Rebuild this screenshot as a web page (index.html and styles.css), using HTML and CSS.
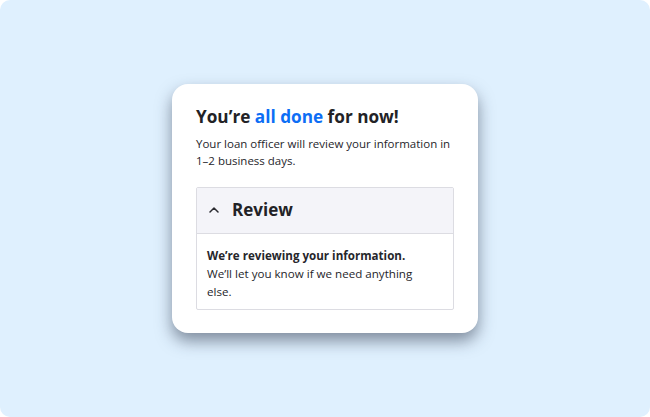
FILE: index.html
```html
<!DOCTYPE html>
<html>
<head>
<meta charset="utf-8">
<link rel="stylesheet" href="styles.css">
</head>
<body>
<div class="stage">
  <div class="card">
    <h1 class="title">You’re <span class="accent">all done</span> for now!</h1>
    <p class="subtitle">Your loan officer will review your information in 1–2 business days.</p>
    <div class="panel">
      <div class="panel-head">
        <svg class="chevron" width="10" height="6" viewBox="0 0 10 6"><path d="M1 5 L5 1 L9 5" fill="none" stroke="#2a2a30" stroke-width="1.5" stroke-linecap="round" stroke-linejoin="round"/></svg>
        <span class="panel-title">Review</span>
      </div>
      <div class="panel-body">
        <p class="strong">We’re reviewing your information.</p>
        <p>We’ll let you know if we need anything else.</p>
      </div>
    </div>
  </div>
</div>
</body>
</html>
```
FILE: styles.css
```css
* { box-sizing: border-box; }
html, body { margin: 0; padding: 0; background: #fff; }
body { width: 650px; height: 417px; font-family: "Open Sans", "Noto Sans", sans-serif; color: #222226; }
.stage {
  width: 650px; height: 417px;
  background: #dff0fe;
  border-radius: 10px;
  display: flex; align-items: center; justify-content: center;
}
.card {
  width: 306px;
  background: #fff;
  border-radius: 16px;
  padding: 21px 24px 23px;
  box-shadow: 0 8px 16px rgba(40, 50, 70, 0.52);
}
.title { margin: 0; font-size: 17.2px; line-height: 24px; font-weight: 700; color: #222226; }
.accent { color: #0d6ef5; }
.subtitle { margin: 6px 0 0; font-size: 11.5px; line-height: 17px; color: #26262b; }
.panel {
  margin-top: 18px;
  border: 1px solid #dcdce2;
  border-radius: 2px;
}
.panel-head {
  height: 46px;
  background: #f4f4f9;
  border-bottom: 1px solid #dcdce2;
  display: flex; align-items: center;
  padding: 0 0 1px 12px;
  gap: 13px;
}
.chevron { display: block; }
.panel-title { font-size: 17px; line-height: 24px; font-weight: 700; color: #222226; }
.panel-body { padding: 13px 24px 8px 10px; font-size: 11.6px; line-height: 18px; color: #26262b; }
.panel-body p { margin: 0; }
.strong { font-weight: 700; }
```
